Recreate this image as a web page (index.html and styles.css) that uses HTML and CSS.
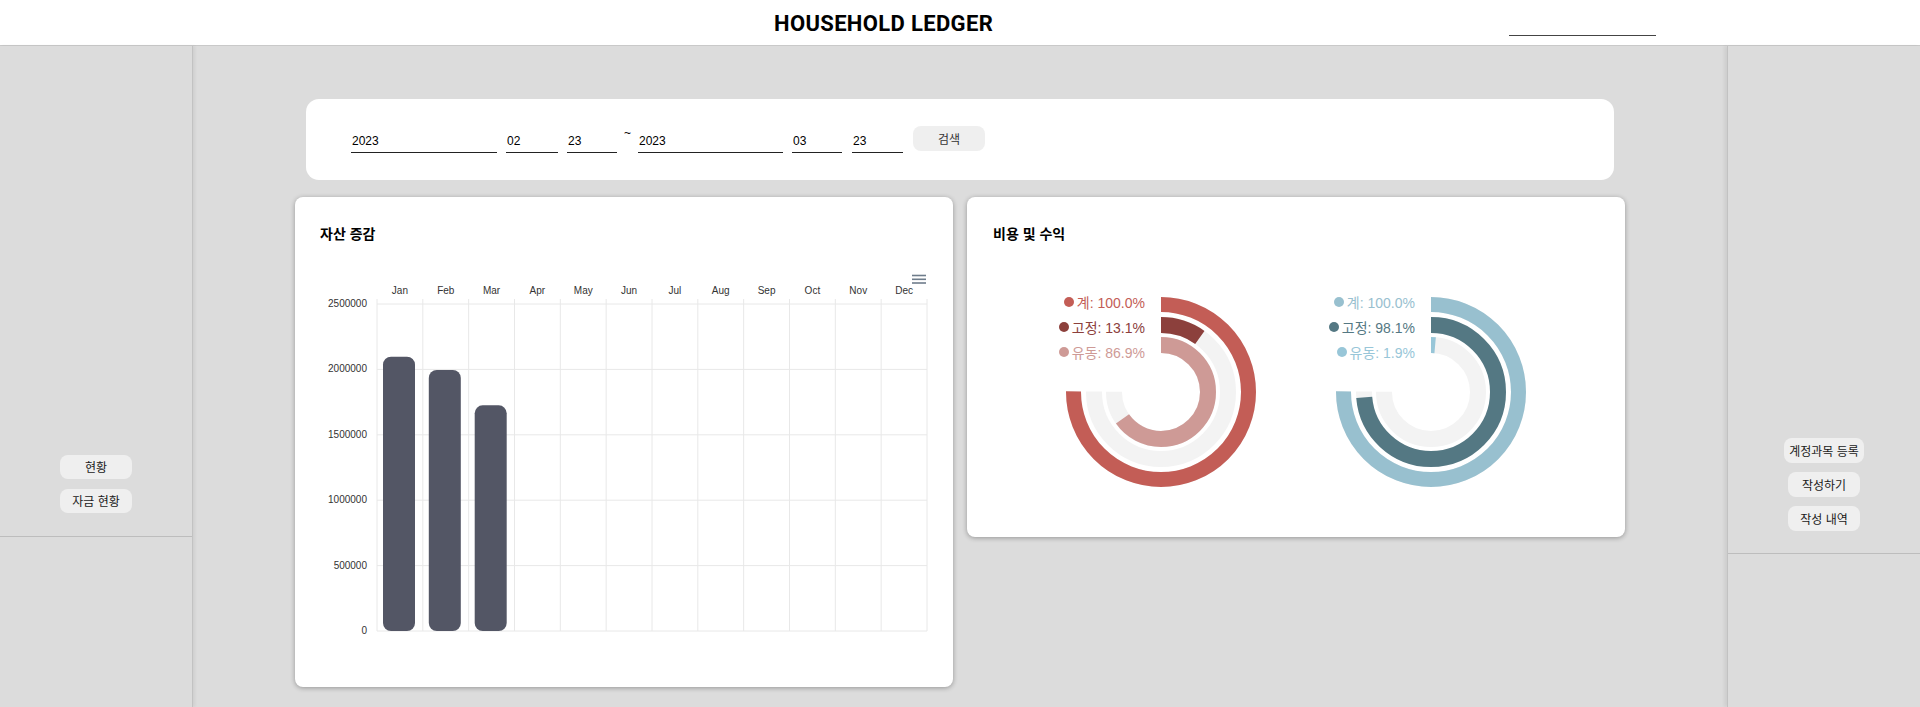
FILE: index.html
```html
<!DOCTYPE html>
<html lang="ko">
<head>
<meta charset="utf-8">
<title>Household Ledger</title>
<link rel="stylesheet" href="styles.css">
</head>
<body>
<header class="topbar">
  <h1 class="brand">HOUSEHOLD LEDGER</h1>
  <input class="top-search" type="text" aria-label="search">
</header>
<div class="layout">
  <aside class="side side-left">
    <div class="side-top side-top-left">
      <button class="side-btn">현황</button>
      <button class="side-btn">자금 현황</button>
    </div>
  </aside>

  <main class="content">
    <section class="search-card">
      <input class="field f-year" type="text" value="2023">
      <input class="field f-mon" type="text" value="02">
      <input class="field f-day" type="text" value="23">
      <span class="tilde">~</span>
      <input class="field f-year2" type="text" value="2023">
      <input class="field f-mon2" type="text" value="03">
      <input class="field f-day2" type="text" value="23">
      <button class="search-btn">검색</button>
    </section>

    <div class="cards">
      <section class="card card-assets">
        <h2 class="card-title">자산 증감</h2>
        <svg class="bar-chart" width="658" height="400" viewBox="0 0 658 400">
          <g class="grid">
            <line x1="82" y1="39" x2="82" y2="371"/>
            <line x1="127.83" y1="39" x2="127.83" y2="371"/>
            <line x1="173.67" y1="39" x2="173.67" y2="371"/>
            <line x1="219.5" y1="39" x2="219.5" y2="371"/>
            <line x1="265.33" y1="39" x2="265.33" y2="371"/>
            <line x1="311.17" y1="39" x2="311.17" y2="371"/>
            <line x1="357" y1="39" x2="357" y2="371"/>
            <line x1="402.83" y1="39" x2="402.83" y2="371"/>
            <line x1="448.67" y1="39" x2="448.67" y2="371"/>
            <line x1="494.5" y1="39" x2="494.5" y2="371"/>
            <line x1="540.33" y1="39" x2="540.33" y2="371"/>
            <line x1="586.17" y1="39" x2="586.17" y2="371"/>
            <line x1="632" y1="39" x2="632" y2="371"/>
            <line x1="82" y1="44" x2="632" y2="44"/>
            <line x1="82" y1="109.4" x2="632" y2="109.4"/>
            <line x1="82" y1="174.8" x2="632" y2="174.8"/>
            <line x1="82" y1="240.2" x2="632" y2="240.2"/>
            <line x1="82" y1="305.6" x2="632" y2="305.6"/>
            <line x1="82" y1="371" x2="632" y2="371"/>
          </g>
          <g class="axis-x">
            <text x="104.9" y="34">Jan</text>
            <text x="150.75" y="34">Feb</text>
            <text x="196.6" y="34">Mar</text>
            <text x="242.4" y="34">Apr</text>
            <text x="288.25" y="34">May</text>
            <text x="334.1" y="34">Jun</text>
            <text x="379.9" y="34">Jul</text>
            <text x="425.75" y="34">Aug</text>
            <text x="471.6" y="34">Sep</text>
            <text x="517.4" y="34">Oct</text>
            <text x="563.25" y="34">Nov</text>
            <text x="609.1" y="34">Dec</text>
          </g>
          <g class="axis-y">
            <text x="72" y="47">2500000</text>
            <text x="72" y="112.4">2000000</text>
            <text x="72" y="177.8">1500000</text>
            <text x="72" y="243.2">1000000</text>
            <text x="72" y="308.6">500000</text>
            <text x="72" y="374">0</text>
          </g>
          <g class="bars">
            <rect x="88" y="96.7" width="32" height="274.3" rx="8"/>
            <rect x="133.8" y="110" width="32" height="261" rx="8"/>
            <rect x="179.7" y="145.3" width="32" height="225.7" rx="8"/>
          </g>
          <g class="menu-icon">
            <line x1="617" y1="15.5" x2="631" y2="15.5"/>
            <line x1="617" y1="19.3" x2="631" y2="19.3"/>
            <line x1="617" y1="23" x2="631" y2="23"/>
          </g>
        </svg>
      </section>

      <section class="card card-cost">
        <h2 class="card-title">비용 및 수익</h2>
        <div class="gauges">
          <div class="gauge">
            <svg width="270" height="200" viewBox="0 0 270 200">
              <g transform="rotate(-90 135 97)" fill="none">
                <circle cx="135" cy="97" r="87.5" stroke="#f3f3f3" stroke-width="15" stroke-dasharray="412.33 1000"/>
                <circle cx="135" cy="97" r="87.5" stroke="#c35d56" stroke-width="15" stroke-dasharray="412.33 1000"/>
                <circle cx="135" cy="97" r="67" stroke="#f3f3f3" stroke-width="16" stroke-dasharray="315.73 1000"/>
                <circle cx="135" cy="97" r="67" stroke="#8c403c" stroke-width="16" stroke-dasharray="41.36 1000"/>
                <circle cx="135" cy="97" r="47" stroke="#f3f3f3" stroke-width="16" stroke-dasharray="221.48 1000"/>
                <circle cx="135" cy="97" r="47" stroke="#ce9a96" stroke-width="16" stroke-dasharray="192.47 1000"/>
              </g>
            </svg>
            <ul class="legend">
              <li class="lg-red"><span class="dot"></span>계: 100.0%</li>
              <li class="lg-dark"><span class="dot"></span>고정: 13.1%</li>
              <li class="lg-pink"><span class="dot"></span>유동: 86.9%</li>
            </ul>
          </div>
          <div class="gauge">
            <svg width="270" height="200" viewBox="0 0 270 200">
              <g transform="rotate(-90 135 97)" fill="none">
                <circle cx="135" cy="97" r="87.5" stroke="#f3f3f3" stroke-width="15" stroke-dasharray="412.33 1000"/>
                <circle cx="135" cy="97" r="87.5" stroke="#98c0cf" stroke-width="15" stroke-dasharray="412.33 1000"/>
                <circle cx="135" cy="97" r="67" stroke="#f3f3f3" stroke-width="16" stroke-dasharray="315.73 1000"/>
                <circle cx="135" cy="97" r="67" stroke="#547883" stroke-width="16" stroke-dasharray="309.73 1000"/>
                <circle cx="135" cy="97" r="47" stroke="#f3f3f3" stroke-width="16" stroke-dasharray="221.48 1000"/>
                <circle cx="135" cy="97" r="47" stroke="#98c6d8" stroke-width="16" stroke-dasharray="4.21 1000"/>
              </g>
            </svg>
            <ul class="legend">
              <li class="lg-sky"><span class="dot"></span>계: 100.0%</li>
              <li class="lg-teal"><span class="dot"></span>고정: 98.1%</li>
              <li class="lg-light"><span class="dot"></span>유동: 1.9%</li>
            </ul>
          </div>
        </div>
      </section>
    </div>
  </main>

  <aside class="side side-right">
    <div class="side-top side-top-right">
      <button class="side-btn">계정과목 등록</button>
      <button class="side-btn">작성하기</button>
      <button class="side-btn">작성 내역</button>
    </div>
  </aside>
</div>
</body>
</html>
```

FILE: styles.css
```css
* { box-sizing: border-box; }

html, body {
  margin: 0;
  padding: 0;
  width: 1920px;
  height: 707px;
  overflow: hidden;
  background: #dcdcdc;
  font-family: "Liberation Sans", "Noto Sans CJK KR", sans-serif;
  color: #111;
}

/* header */
.topbar {
  height: 46px;
  background: #fff;
  border-bottom: 1px solid #c9c9c9;
  display: flex;
  align-items: center;
  padding-left: 774px;
}
.brand {
  margin: 0;
  font-family: Roboto, "Liberation Sans", sans-serif;
  font-weight: 700;
  font-size: 22px;
  letter-spacing: 0.35px;
  color: #000;
  line-height: 1;
  padding-top: 2px;
}
.top-search {
  margin-left: auto;
  margin-right: 264px;
  width: 147px;
  height: 22px;
  margin-top: 5px;
  border: none;
  border-bottom: 1px solid #444;
  background: transparent;
  outline: none;
}

/* layout */
.layout {
  display: flex;
  height: 661px;
}
.side {
  width: 193px;
  flex: none;
  background: #dcdcdc;
  position: relative;
}
.side-left {
  border-right: 1px solid #c2c2c2;
  box-shadow: 2px 0 3px rgba(0, 0, 0, 0.06);
}
.side-right {
  border-left: 1px solid #c2c2c2;
  box-shadow: -3px 0 3px rgba(0, 0, 0, 0.06);
}
.side-top {
  display: flex;
  flex-direction: column;
  align-items: center;
  justify-content: flex-end;
  border-bottom: 1px solid #bdbdbd;
}
.side-top-left {
  height: 491px;
  padding-bottom: 23px;
  gap: 10px;
}
.side-top-right {
  height: 508px;
  padding-bottom: 22px;
  gap: 9px;
}
.side-btn {
  min-width: 72px;
  height: 25px;
  padding: 0 5px;
  border: none;
  border-radius: 8px;
  background: #efefef;
  font-family: "Noto Sans CJK KR", sans-serif;
  font-size: 12px;
  color: #1a1a1a;
  line-height: 25px;
}
.side-top-left .side-btn { height: 24px; line-height: 24px; }

/* content */
.content {
  flex: 1;
  display: flex;
  flex-direction: column;
  align-items: center;
  padding-top: 53px;
}

.search-card {
  width: 1308px;
  height: 81px;
  background: #fff;
  border-radius: 13px;
  display: flex;
  align-items: center;
  padding-left: 45px;
}
.field {
  height: 24px;
  border: none;
  border-bottom: 1px solid #222;
  background: transparent;
  font-family: "Liberation Sans", sans-serif;
  font-size: 12px;
  color: #000;
  padding: 0 1px 0;
  outline: none;
  margin-top: 3px;
}
.f-year { width: 146px; margin-right: 9px; }
.f-mon { width: 52px; margin-right: 9px; }
.f-day { width: 50px; margin-right: 7px; }
.tilde {
  font-size: 12px;
  width: 7px;
  margin-right: 7px;
  align-self: flex-start;
  margin-top: 28px;
  line-height: 12px;
  color: #000;
}
.f-year2 { width: 145px; margin-right: 9px; }
.f-mon2 { width: 50px; margin-right: 10px; }
.f-day2 { width: 51px; margin-right: 10px; }
.search-btn {
  width: 72px;
  height: 25px;
  border: none;
  border-radius: 8px;
  background: #efefef;
  font-family: "Noto Sans CJK KR", sans-serif;
  font-size: 12px;
  color: #333;
  margin-top: -2px;
}

.cards {
  display: flex;
  gap: 14px;
  align-items: flex-start;
  margin-top: 17px;
  width: 1330px;
}
.card {
  width: 658px;
  background: #fff;
  border-radius: 8px;
  box-shadow: 0 1px 5px rgba(0, 0, 0, 0.32);
  padding-top: 26px;
}
.card-assets { height: 490px; }
.card-cost { height: 340px; }
.card-title {
  margin: 0;
  padding-left: 25px;
  font-family: "Noto Sans CJK KR", sans-serif;
  font-size: 14px;
  font-weight: 700;
  line-height: 20px;
  color: #000;
}
.card-cost .card-title { padding-left: 26px; }

.bar-chart {
  display: block;
  margin-top: 17px;
}
.bar-chart .grid line {
  stroke: #e8e8e8;
  stroke-width: 1;
}
.bar-chart text {
  font-family: "Liberation Sans", sans-serif;
  font-size: 10px;
  fill: #333;
}
.axis-x text { text-anchor: middle; }
.axis-y text { text-anchor: end; }
.bars rect { fill: #535665; }
.menu-icon line {
  stroke: #6e7c8b;
  stroke-width: 1.6;
}

.gauges {
  display: flex;
  justify-content: center;
  margin-top: 52px;
}
.gauge {
  width: 270px;
  height: 200px;
  position: relative;
}
.gauge svg { display: block; }
.legend {
  position: absolute;
  top: -6px;
  right: 151px;
  margin: 0;
  padding: 0;
  list-style: none;
  display: flex;
  flex-direction: column;
  align-items: flex-end;
}
.legend li {
  display: flex;
  align-items: center;
  gap: 2px;
  height: 25px;
  font-family: "Liberation Sans", "Noto Sans CJK KR", sans-serif;
  font-size: 14px;
  white-space: nowrap;
}
.dot {
  width: 10px;
  height: 10px;
  border-radius: 50%;
  background: currentColor;
  margin-right: 1px;
}
.lg-red { color: #c35d56; }
.lg-dark { color: #8c403c; }
.lg-pink { color: #ce9a96; }
.lg-sky { color: #98c0cf; }
.lg-teal { color: #547883; }
.lg-light { color: #98c6d8; }
```
